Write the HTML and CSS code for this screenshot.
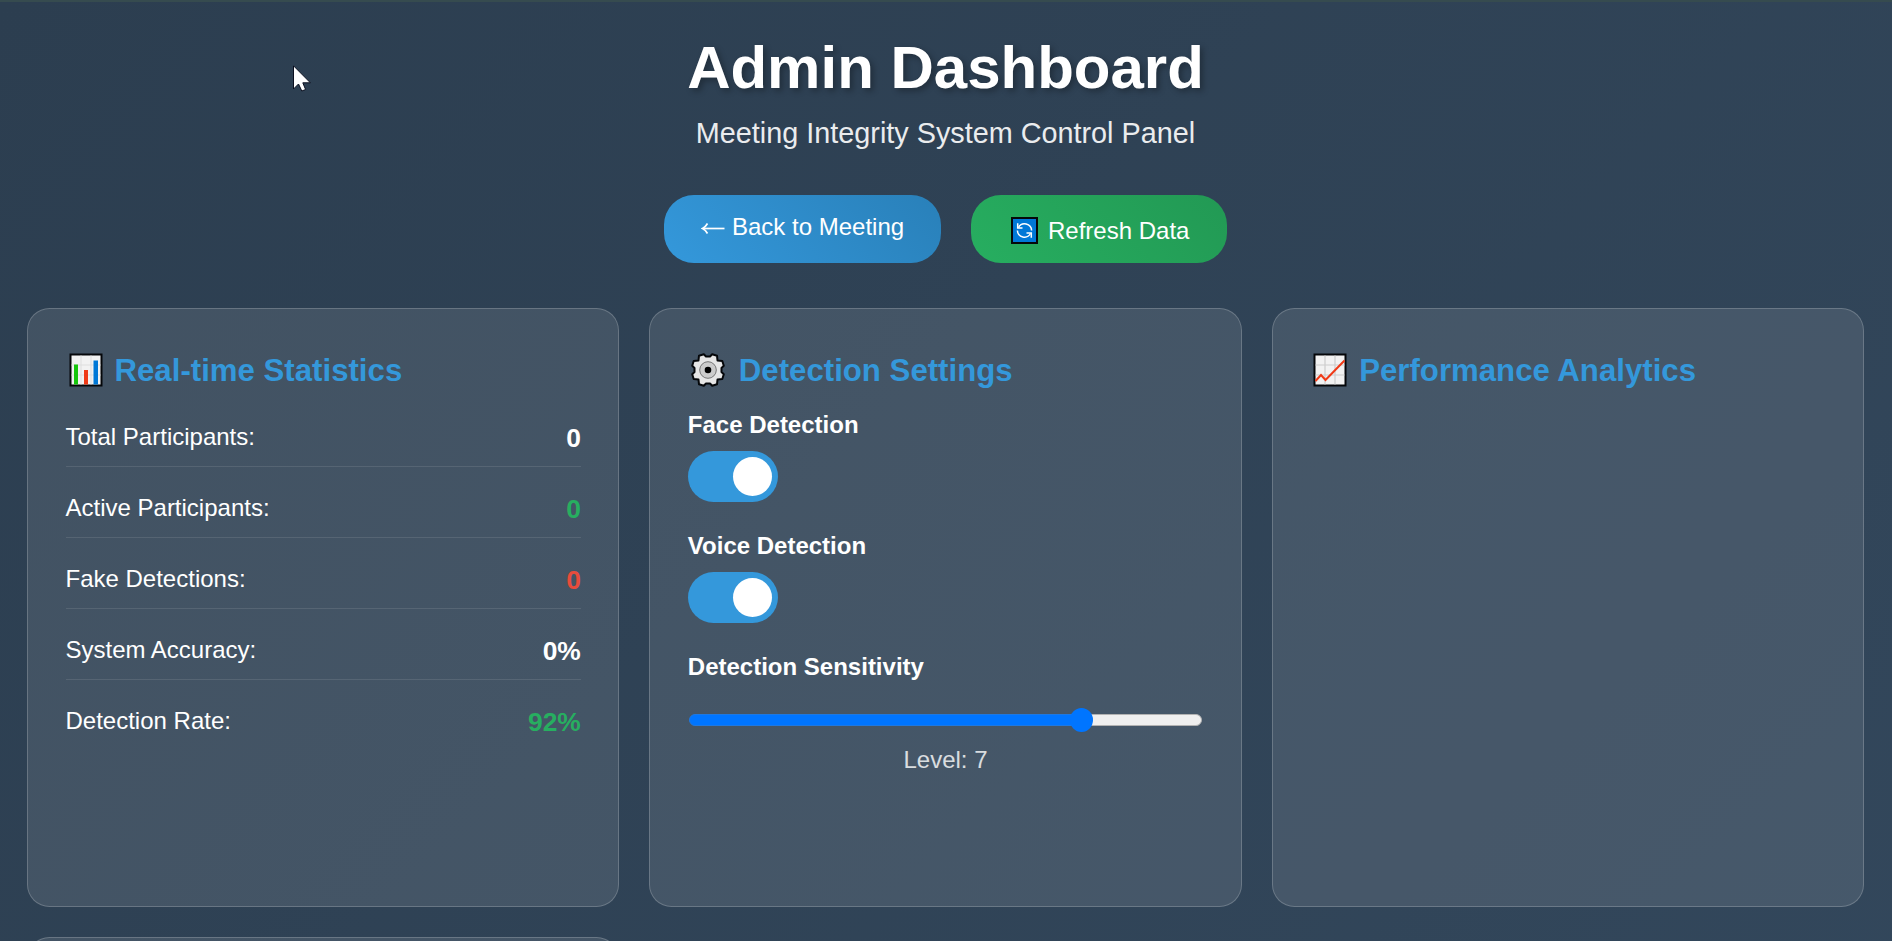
FILE: index.html
```html
<!DOCTYPE html>
<html lang="en">
<head>
<meta charset="utf-8">
<title>Admin Dashboard</title>
<link rel="stylesheet" href="styles.css">
</head>
<body>
<div class="viewport">
<div class="page">
  <header class="header">
    <h1 class="title">Admin Dashboard</h1>
    <p class="subtitle">Meeting Integrity System Control Panel</p>
    <div class="actions">
      <button class="btn btn-back"><svg class="arrow" viewBox="0 0 24 14"><path d="M23.500 7.500H2" fill="none" stroke="#fff" stroke-width="1.700"/><path d="M6.500 2.500Q4.500 6 1.500 7.500Q4.500 9 6.500 12.500" fill="none" stroke="#fff" stroke-width="1.700"/></svg><span>Back to Meeting</span></button>
      <button class="btn btn-refresh">
        <svg class="refresh" viewBox="0 0 27 27"><rect width="27" height="27" fill="#06080a"/><rect x="2" y="2" width="23" height="23" fill="#0078d7"/><g fill="none" stroke="#fff" stroke-width="1.5"><path d="M7.500 10.500A7 7 0 0 1 20.600 13.500M19.500 16.500A7 7 0 0 1 6.400 13.500"/><path d="M6.700 6.300V11H11.500M20.300 20.700V16H15.500"/></g></svg>
        <span>Refresh Data</span></button>
    </div>
  </header>
  <main class="grid">
    <section class="card">
      <h3 class="card-title"><svg class="icon" viewBox="0 0 34 34"><rect x=".5" y=".5" width="33" height="33" fill="#05070a"/><rect x="2.500" y="2.500" width="29" height="29" fill="#f2f2f2"/><path d="M12 2.500v29M22 2.500v29M2.500 12h29M2.500 22h29" stroke="#dedede"/><path d="M5 11.500h4v20H5z" fill="#16c60c"/><path d="M15 17h4v14.500h-4z" fill="#f03a17"/><path d="M24.500 7.500h4.500v24h-4.500z" fill="#0078d7"/></svg><span>Real-time Statistics</span></h3>
      <div class="stats">
        <div class="stat"><span>Total Participants:</span><b>0</b></div>
        <div class="stat"><span>Active Participants:</span><b class="good">0</b></div>
        <div class="stat"><span>Fake Detections:</span><b class="bad">0</b></div>
        <div class="stat"><span>System Accuracy:</span><b>0%</b></div>
        <div class="stat"><span>Detection Rate:</span><b class="good">92%</b></div>
      </div>
    </section>
    <section class="card">
      <h3 class="card-title"><svg class="icon icon-gear" viewBox="0 0 34 34"><path d="M8 2.700 12.800 1.200 15 3.500H19L21.200 1.200 26 2.700 26.500 7.500 31.300 8 32.800 12.800 30.500 15V19L32.800 21.200 31.300 26 26.500 26.500 26 31.300 21.200 32.800 19 30.500H15L12.800 32.800 8 31.300 7.500 26.500 2.700 26 1.200 21.200 3.500 19V15L1.200 12.800 2.700 8 7.500 7.500Z" fill="#e6e6e6" stroke="#05070a" stroke-width="2" stroke-linejoin="round"/><circle cx="17" cy="17" r="8.300" fill="#ccc" stroke="#767676"/><circle cx="17" cy="17" r="3.300"/></svg><span>Detection Settings</span></h3>
      <div class="controls">
        <div class="control"><label>Face Detection</label><div class="toggle"><i></i></div></div>
        <div class="control"><label>Voice Detection</label><div class="toggle"><i></i></div></div>
        <div class="control"><label>Detection Sensitivity</label>
          <div class="slider"><div class="fill"></div><div class="thumb"></div><div class="rest"></div></div>
          <p class="level">Level: 7</p></div>
      </div>
    </section>
    <section class="card">
      <h3 class="card-title"><svg class="icon" viewBox="0 0 34 34"><rect x=".5" y=".5" width="33" height="33" fill="#05070a"/><rect x="2.500" y="2.500" width="29" height="29" fill="#f2f2f2"/><path d="M12 2.500v29M22 2.500v29M2.500 12h29M2.500 22h29" stroke="#ccc" stroke-width="1.200"/><path d="M2.500 28 8 22 12.500 27 31.500 7.500" fill="none" stroke="#f03a17" stroke-width="2"/></svg><span>Performance Analytics</span></h3>
    </section>
    <section class="card"></section>
  </main>
  <svg class="cursor" viewBox="0 0 18 27"><path d="M.5.8V24L5.500 19 8.800 26 12.600 24.500 9.800 17.800H17.400Z" fill="#fff" stroke="#0b1020" stroke-width="1"/></svg>
</div>
</div>
</body>
</html>
```
FILE: styles.css
```css
* { box-sizing: border-box; margin: 0; padding: 0; }
body { font-family: "Liberation Sans", Arial, sans-serif; color: #fff; font-size: 24px; background: #2c3e50; }
.viewport { height: 941px; overflow: hidden; }
.page { position: relative; height: 1700px; padding: 31px 28px 0 27px; border-top: 2px solid #364b4f; background: linear-gradient(135deg, #2c3e50 0%, #34495e 100%); }
.header { display: flex; flex-direction: column; align-items: center; }
.title { font-size: 60px; line-height: 69px; text-shadow: 3px 3px 6px rgba(0, 0, 0, .3); }
.subtitle { margin-top: 15px; font-size: 28.8px; line-height: 33px; opacity: .9; }
.actions { display: flex; gap: 30px; margin-top: 45px; }
.btn { display: flex; height: 68px; border: 0; border-radius: 30px; color: #fff; font: 24px/27px "Liberation Sans", Arial, sans-serif; }
.btn-back { width: 277px; padding: 18px 0 0 37px; background: linear-gradient(45deg, #3498db, #2980b9); }
.btn-refresh { width: 256px; padding: 22px 0 0 40px; background: linear-gradient(45deg, #27ae60, #229954); }
.arrow { width: 24px; height: 14px; margin: 8px 7px 0 0; }
.refresh { width: 27px; height: 27px; margin-right: 10px; }
.grid { display: grid; grid-template-columns: repeat(3, 1fr); grid-auto-rows: 599px; gap: 30px; margin-top: 45px; }
.card { padding: 44px 37.5px 0; border: 1px solid rgba(255, 255, 255, .2); border-radius: 22.5px; background: rgba(255, 255, 255, .1); }
.card-title { display: flex; align-items: center; height: 36px; padding-left: 3px; color: #3498db; font-size: 31.2px; }
.icon { width: 34px; height: 34px; margin: 0 12px 2px 0; }
.icon-gear { margin-right: 14px; }
.stats { margin-top: 19px; }
.stat { display: flex; justify-content: space-between; align-items: center; height: 71px; padding-top: 12px; border-bottom: 1px solid rgba(255, 255, 255, .1); }
.stat:first-child { height: 59px; padding-top: 0; }
.stat:last-child { height: 70px; border-bottom: 0; }
.stat b { padding-top: 2px; font-size: 26.4px; }
.good { color: #27ae60; }
.bad { color: #e74c3c; }
.controls { margin-top: 22px; }
.control { height: 121px; }
.control label { display: block; height: 40px; line-height: 27px; font-weight: bold; }
.toggle { display: flex; justify-content: flex-end; width: 90px; height: 51px; padding: 6px; border-radius: 26px; background: #3498db; }
.toggle i { width: 39px; height: 39px; border-radius: 50%; background: #fff; }
.slider { display: flex; align-items: center; height: 24px; margin: 15px 1px 0; }
.fill { width: 392px; height: 12px; margin-right: -11px; border: 1px solid #1f78e0; border-radius: 6px 0 0 6px; background: #0075ff; }
.thumb { z-index: 1; width: 23px; height: 24px; border-radius: 50%; background: #0075ff; }
.rest { flex: 1; height: 12px; margin-left: -6px; border: 1px solid #b2b2b2; border-radius: 0 6px 6px 0; background: #efefef; }
.level { margin-top: 14px; line-height: 27px; text-align: center; opacity: .8; }
.cursor { position: absolute; left: 293px; top: 63px; width: 18px; height: 27px; }
```
